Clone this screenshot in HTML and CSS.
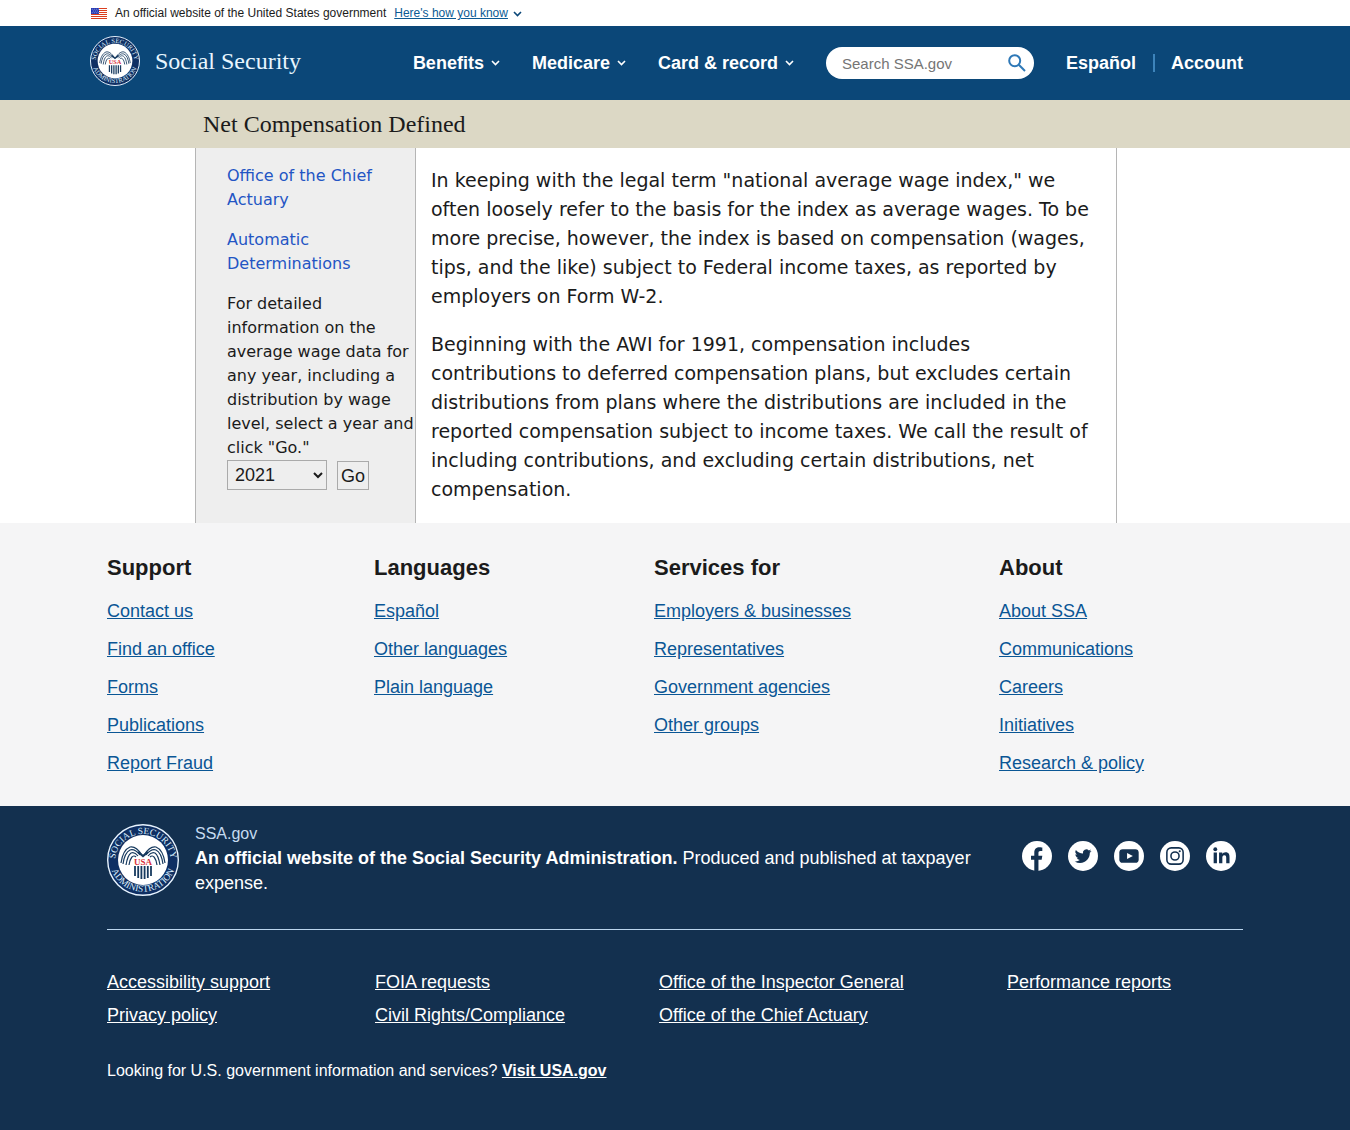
FILE: index.html
```
<!DOCTYPE html>
<html lang="en">
<head>
<meta charset="utf-8">
<meta name="viewport" content="width=device-width, initial-scale=1">
<title>Net Compensation Defined</title>
<link rel="stylesheet" href="styles.css">
</head>
<body>
<div class="gov-banner wrap">
  <svg class="flag" viewBox="0 0 16 11" aria-hidden="true">
    <path fill="#fff" d="M0 0h16v11H0z"/>
    <path stroke="#db3e1f" d="M0 .5h16M0 2.500h16M0 4.500h16M0 6.500h16M0 8.500h16M0 10.500h16"/>
    <path fill="#1e33b1" d="M0 0h8v6H0z"/>
    <path stroke="#fff" stroke-width=".7" stroke-dasharray=".8 1.200" d="M.8 1.200h7M1.800 3h6M.8 4.800h7"/>
  </svg>
  <span>An official website of the United States government</span>
  <a href="#how">Here's how you know</a>
  <svg class="chevron" viewBox="0 0 9 6" aria-hidden="true"><path id="chevron" d="M1 1l3.500 3.500L8 1" fill="none" stroke="currentColor" stroke-width="1.600"/></svg>
</div>

<header class="site-header">
  <div class="wrap header-row">
    <a class="brand" href="#home">
      <svg class="brand-seal" viewBox="0 0 72 72" aria-hidden="true">
        <defs>
          <path id="arc-top" d="M8 38a28 28 0 0 1 56 0"/>
          <path id="arc-bottom" d="M2.300 34a33.700 33.700 0 0 0 67.400 0"/>
        </defs>
        <g id="seal">
          <circle cx="36" cy="36" r="35.300" fill="#0f2f63" stroke="#e8f4ff" stroke-width="1.400"/>
          <circle cx="36" cy="36" r="25" fill="#fff"/>
          <g fill="#dcefff" font-family="Liberation Serif, serif" font-size="9.400" text-anchor="middle">
            <text><textPath href="#arc-top" startOffset="50%">SOCIAL SECURITY</textPath></text>
            <text><textPath href="#arc-bottom" startOffset="50%">ADMINISTRATION</textPath></text>
          </g>
          <g fill="none" stroke="#173a5f" stroke-width="1.200">
            <path d="M35 31c-4-6-8-9-12-8-5 2-8 9-9 16M33 31c-4-5-7-6-10-5-4 2-6 7-7 14M31 32c-3-4-5-4-7-3-3 2-4 6-5 12M29 33c-3-3-6 1-7 8M37 31c4-6 8-9 12-8 5 2 8 9 9 16M39 31c4-5 7-6 10-5 4 2 6 7 7 14M41 32c3-4 5-4 7-3 3 2 4 6 5 12M43 33c3-3 6 1 7 8"/>
            <path d="M31 28l5 4 5-4" stroke-width="2.200"/>
            <path d="M28 42v10M31.200 42v12M34.400 42v13M37.600 42v13M40.800 42v12M44 42v10" stroke-width="1.800"/>
          </g>
          <text x="36" y="41" text-anchor="middle" font-family="Liberation Serif, serif" font-weight="700" font-size="9" fill="#d9303a">USA</text>
        </g>
      </svg>
      <span>Social Security</span>
    </a>
    <nav class="main-nav" aria-label="Main">
      <button type="button">Benefits<svg class="chevron" viewBox="0 0 9 6" aria-hidden="true"><use href="#chevron"/></svg></button>
      <button type="button">Medicare<svg class="chevron" viewBox="0 0 9 6" aria-hidden="true"><use href="#chevron"/></svg></button>
      <button type="button">Card &amp; record<svg class="chevron" viewBox="0 0 9 6" aria-hidden="true"><use href="#chevron"/></svg></button>
      <form class="search">
        <input type="search" placeholder="Search SSA.gov" aria-label="Search SSA.gov">
        <button type="button" aria-label="Search"><svg viewBox="0 0 18 18" fill="none" stroke="currentColor" stroke-width="2" aria-hidden="true"><circle cx="6.700" cy="6.700" r="5.500"/><path d="M10.800 10.800l6.200 6.200"/></svg></button>
      </form>
      <div class="account-links">
        <a href="#es">Español</a>
        <a href="#account">Account</a>
      </div>
    </nav>
  </div>
</header>

<div class="title-bar"><h1>Net Compensation Defined</h1></div>

<main class="content">
  <aside>
    <p><a href="#oact">Office of the Chief Actuary</a></p>
    <p><a href="#cola">Automatic Determinations</a></p>
    <form>
      <label for="year">For detailed information on the average wage data for any year, including a distribution by wage level, select a year and click "Go."</label>
      <div class="year-row">
        <select id="year"><option>2021</option><option>2020</option><option>2019</option></select>
        <button type="button">Go</button>
      </div>
    </form>
  </aside>
  <article>
    <p>In keeping with the legal term "national average wage index," we often loosely refer to the basis for the index as average wages. To be more precise, however, the index is based on compensation (wages, tips, and the like) subject to Federal income taxes, as reported by employers on Form W-2.</p>
    <p>Beginning with the AWI for 1991, compensation includes contributions to deferred compensation plans, but excludes certain distributions from plans where the distributions are included in the reported compensation subject to income taxes. We call the result of including contributions, and excluding certain distributions, net compensation.</p>
  </article>
</main>

<footer>
  <div class="footer-nav">
    <div class="footer-wrap nav-columns">
      <section>
        <h2>Support</h2>
        <ul>
          <li><a href="#contact">Contact us</a></li>
          <li><a href="#office">Find an office</a></li>
          <li><a href="#forms">Forms</a></li>
          <li><a href="#publications">Publications</a></li>
          <li><a href="#fraud">Report Fraud</a></li>
        </ul>
      </section>
      <section>
        <h2>Languages</h2>
        <ul>
          <li><a href="#espanol">Español</a></li>
          <li><a href="#languages">Other languages</a></li>
          <li><a href="#plain">Plain language</a></li>
        </ul>
      </section>
      <section>
        <h2>Services for</h2>
        <ul>
          <li><a href="#employers">Employers &amp; businesses</a></li>
          <li><a href="#representatives">Representatives</a></li>
          <li><a href="#agencies">Government agencies</a></li>
          <li><a href="#groups">Other groups</a></li>
        </ul>
      </section>
      <section>
        <h2>About</h2>
        <ul>
          <li><a href="#about">About SSA</a></li>
          <li><a href="#communications">Communications</a></li>
          <li><a href="#careers">Careers</a></li>
          <li><a href="#initiatives">Initiatives</a></li>
          <li><a href="#research">Research &amp; policy</a></li>
        </ul>
      </section>
    </div>
  </div>
  <div class="footer-legal">
    <div class="footer-wrap">
      <div class="identity">
        <svg class="footer-seal" viewBox="0 0 72 72" aria-hidden="true"><use href="#seal"/></svg>
        <div class="identity-text">
          <p class="domain">SSA.gov</p>
          <p><strong>An official website of the Social Security Administration.</strong> Produced and published at taxpayer expense.</p>
        </div>
        <div class="social">
          <a href="#facebook" aria-label="Facebook"><svg viewBox="0 0 31 31"><circle cx="15.500" cy="15.500" r="15.500" fill="#fff"/><path fill="#13304f" d="M12.700 31V19.500H9.300v-4.300h3.400v-3.300c0-3.700 2.200-5.400 5.400-5.400 1.400 0 2.900.3 2.900.3v3.500h-1.900c-1.700 0-2.100 1-2.100 2v2.900h4l-.7 4.300H17V31z"/></svg></a>
          <a href="#twitter" aria-label="Twitter"><svg viewBox="0 0 31 31"><circle cx="15.500" cy="15.500" r="15.500" fill="#fff"/><path fill="#13304f" transform="translate(7 7) scale(.72)" d="M23.950 4.570a10 10 0 0 1-2.820.77 4.960 4.960 0 0 0 2.160-2.720c-.95.550-2 .96-3.130 1.180a4.920 4.920 0 0 0-8.380 4.480C7.690 8.090 4.070 6.130 1.640 3.160a4.920 4.920 0 0 0 1.520 6.570 4.900 4.900 0 0 1-2.230-.61v.06a4.920 4.920 0 0 0 3.950 4.830 4.900 4.900 0 0 1-2.210.08 4.930 4.930 0 0 0 4.600 3.420A9.870 9.870 0 0 1 0 19.540a13.990 13.990 0 0 0 7.550 2.210c9.050 0 14-7.500 14-13.990 0-.21 0-.42-.02-.63a9.940 9.940 0 0 0 2.460-2.550z"/></svg></a>
          <a href="#youtube" aria-label="YouTube"><svg viewBox="0 0 31 31"><circle cx="15.500" cy="15.500" r="15.500" fill="#fff"/><rect x="5.500" y="8.500" width="20" height="14" rx="3.500" fill="#13304f"/><path d="M13.500 12.300l6 3.200-6 3.200z" fill="#fff"/></svg></a>
          <a href="#instagram" aria-label="Instagram"><svg viewBox="0 0 31 31"><circle cx="15.500" cy="15.500" r="15.500" fill="#fff"/><g fill="none" stroke="#13304f" stroke-width="1.600"><rect x="7.100" y="7.100" width="16.800" height="16.800" rx="4.500"/><circle cx="15.500" cy="15.500" r="4.200"/></g><circle cx="20.400" cy="10.600" r="1.100" fill="#13304f"/></svg></a>
          <a href="#linkedin" aria-label="LinkedIn"><svg viewBox="0 0 31 31"><circle cx="15.500" cy="15.500" r="15.500" fill="#fff"/><g fill="#13304f"><circle cx="9.600" cy="8.500" r="2"/><path d="M7.900 12h3.400v11H7.900zM13.500 12h3.300v1.500c.6-1 1.800-1.800 3.400-1.800 3.400 0 4.100 2.200 4.100 5.300v6h-3.400v-5.400c0-1.400 0-3-1.900-3s-2.100 1.500-2.100 2.900V23h-3.400z"/></g></svg></a>
        </div>
      </div>
      <ul class="legal-links">
        <li><a href="#accessibility">Accessibility support</a></li>
        <li><a href="#foia">FOIA requests</a></li>
        <li><a href="#oig">Office of the Inspector General</a></li>
        <li><a href="#performance">Performance reports</a></li>
        <li><a href="#privacy">Privacy policy</a></li>
        <li><a href="#civil-rights">Civil Rights/Compliance</a></li>
        <li><a href="#chief-actuary">Office of the Chief Actuary</a></li>
      </ul>
      <p class="usa">Looking for U.S. government information and services? <a href="#usa">Visit USA.gov</a></p>
    </div>
  </div>
</footer>
</body>
</html>
```
FILE: styles.css
```
* { box-sizing: border-box; }

body {
  display: flex;
  flex-direction: column;
  min-height: 100vh;
  margin: 0;
  background: #fff;
  color: #1b1b1b;
  font-family: "Liberation Sans", Arial, sans-serif;
  font-size: 18px;
}

h1, h2, p, ul { margin: 0; padding: 0; }
ul { list-style: none; }
button, input, select { font: inherit; }

.wrap {
  width: 100%;
  max-width: 1170px;
  margin: 0 auto;
}

.chevron { width: 9px; height: 6px; flex: none; }

/* Government banner */
.gov-banner {
  display: flex;
  align-items: center;
  gap: 8px;
  height: 26px;
  padding-left: 1px;
  font-size: 12px;
}
.gov-banner a { color: #0b5a94; }
.gov-banner .chevron { margin-left: -3px; margin-top: 2px; color: #0b4778; }
.flag { width: 16px; height: 11px; }

/* Header */
.site-header { background: #0b4778; }
.header-row {
  display: flex;
  align-items: center;
  justify-content: space-between;
  min-height: 74px;
  padding-right: 17px;
}
.brand {
  display: flex;
  align-items: center;
  gap: 15px;
  margin-bottom: 4px;
  color: #e8f6ff;
  font-family: "Liberation Serif", "Times New Roman", serif;
  font-size: 24px;
  text-decoration: none;
}
.brand-seal { width: 50px; height: 50px; }
.main-nav {
  display: flex;
  align-items: center;
  gap: 32px;
  color: #fff;
  font-weight: 700;
}
.main-nav > button {
  display: flex;
  align-items: center;
  gap: 7px;
  padding: 0;
  border: 0;
  background: none;
  color: inherit;
}
.search {
  display: flex;
  align-items: center;
  width: 208px;
  height: 32px;
  padding: 0 8px 0 16px;
  border-radius: 16px;
  background: #fff;
}
.search input {
  flex: 1;
  min-width: 0;
  padding: 0;
  border: 0;
  outline: 0;
  background: none;
  font-size: 15px;
  font-weight: 400;
}
.search input::placeholder { color: #757575; }
.search button {
  display: flex;
  padding: 0;
  border: 0;
  background: none;
  color: #2e78b7;
}
.search button svg { width: 18px; height: 18px; }
.account-links { display: flex; }
.account-links a { color: inherit; text-decoration: none; line-height: 18px; }
.account-links a + a {
  margin-left: 17px;
  padding-left: 16px;
  border-left: 2px solid #3d84bb;
}

/* Page title */
.title-bar { background: #dcd8c5; }
.title-bar h1 {
  max-width: 960px;
  margin: 0 auto;
  padding: 0 8px;
  font-family: "Liberation Serif", "Times New Roman", serif;
  font-size: 24px;
  font-weight: 400;
  line-height: 48px;
}

/* Main content */
.content {
  display: grid;
  grid-template-columns: 220px 1fr;
  width: 100%;
  max-width: 960px;
  margin: 0 auto;
  padding-right: 38px;
  font-family: "DejaVu Sans", Verdana, sans-serif;
}
aside {
  padding: 16px 0 16px 31px;
  border-left: 1px solid #b5b5b5;
  background: #eee;
  font-size: 16px;
  line-height: 24px;
}
aside p { margin-bottom: 16px; }
aside a { color: #2355c4; text-decoration: none; }
.year-row {
  display: flex;
  gap: 10px;
  align-items: flex-end;
  font-family: "Liberation Sans", Arial, sans-serif;
  font-size: 18px;
}
.year-row select, .year-row button {
  border: 1px solid #aaa;
  background: #eee;
  color: #1b1b1b;
}
.year-row select { width: 100px; height: 30px; padding: 0 3px; }
.year-row button { width: 32px; height: 29px; padding: 0; }
article {
  padding: 18px 15px 19px;
  border: solid #b5b5b5;
  border-width: 0 1px;
  font-size: 19px;
  line-height: 29px;
}
article p + p { margin-top: 19px; }

/* Footer */
footer { display: flex; flex: 1; flex-direction: column; }
.footer-wrap {
  width: 100%;
  max-width: 1168px;
  margin: 0 auto;
  padding: 0 16px;
}
.footer-nav { padding: 32px 0; background: #f5f5f6; }
.nav-columns {
  display: grid;
  grid-template-columns: 267fr 280fr 345fr 244fr;
}
.nav-columns h2 {
  margin-bottom: 20px;
  font-size: 22px;
  line-height: 25px;
}
.nav-columns li { line-height: 22px; }
.nav-columns li + li { margin-top: 16px; }
.nav-columns a { color: #0a5695; }

.footer-legal {
  flex: 1;
  padding: 18px 0 32px;
  background: #13304f;
  color: #fff;
}
.footer-legal a { color: inherit; }
.identity {
  display: flex;
  align-items: flex-start;
  gap: 16px;
  padding-bottom: 33px;
  border-bottom: 1px solid #bcd6ee;
}
.footer-seal { width: 72px; height: 72px; flex: none; }
.identity-text { flex: 1; line-height: 25px; }
.identity-text .domain { color: #c5dbf0; font-size: 16px; line-height: 20px; margin-bottom: 2px; }
.social { display: flex; gap: 16px; padding: 17px 7px 0 16px; }
.social a { display: flex; }
.social svg { width: 30px; height: 30px; }
.legal-links {
  display: grid;
  grid-template-columns: 268fr 284fr 348fr 236fr;
  row-gap: 11px;
  margin: 41px 0 33px;
  line-height: 22px;
}
.usa { font-size: 16px; line-height: 24px; }
.usa a { font-weight: 700; }
```
